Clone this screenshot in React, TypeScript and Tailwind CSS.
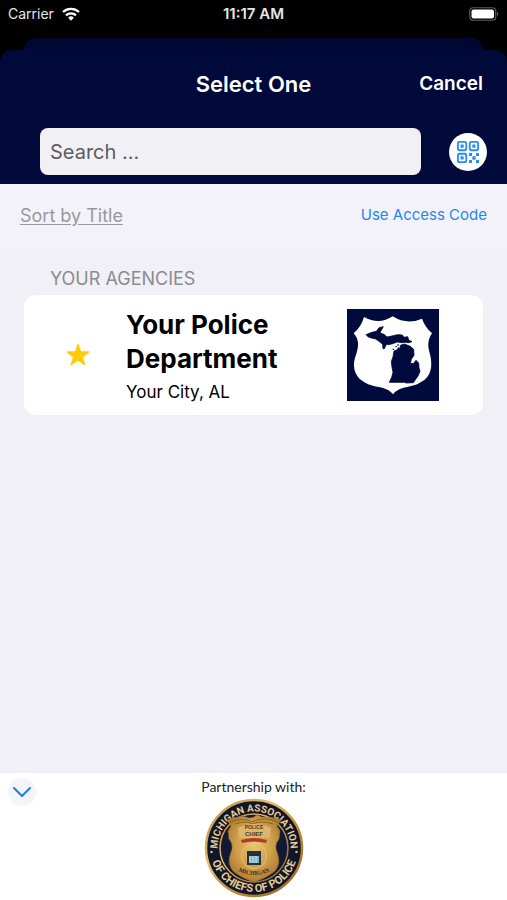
import { useState } from "react";

type Agency = {
  id: number;
  title: string;
  location: string;
};

const agencies: Agency[] = [
  { id: 1, title: "Your Police Department", location: "Your City, AL" },
];

function WifiIcon() {
  return (
    <svg viewBox="0 0 54 42" className="h-[14px] w-[18px]" fill="none" stroke="#fff" strokeWidth="7" aria-hidden="true">
      <path d="M3 15 A35 35 0 0 1 51 15" />
      <path d="M12 25 A22 22 0 0 1 42 25" />
      <path d="M27 41 L18.500 32 A12.500 12.500 0 0 1 35.500 32 Z" fill="#fff" stroke="none" />
    </svg>
  );
}

function BatteryIcon() {
  return (
    <svg viewBox="0 0 30 14" className="h-[14px] w-[30px]" aria-hidden="true">
      <rect x="0.750" y="0.750" width="26" height="12.500" rx="3.500" fill="none" stroke="#5c5c5c" strokeWidth="1.200" />
      <rect x="2.500" y="2.500" width="22.500" height="9" rx="2" fill="#fff" />
      <path d="M28 4.800 Q30 7 28 9.200 Z" fill="#777" />
    </svg>
  );
}

function QrIcon() {
  return (
    <svg viewBox="0 0 66 66" className="size-[22px]" fill="#2a8cf4" aria-hidden="true">
      <g fill="none" stroke="#2a8cf4" strokeWidth="5.500">
        <rect x="2.750" y="2.750" width="25" height="25" rx="5" />
        <rect x="38.250" y="2.750" width="25" height="25" rx="5" />
        <rect x="2.750" y="38.250" width="25" height="25" rx="5" />
      </g>
      <rect x="10.500" y="10.500" width="9.500" height="9.500" rx="1" />
      <rect x="46" y="10.500" width="9.500" height="9.500" rx="1" />
      <rect x="10.500" y="46" width="9.500" height="9.500" rx="1" />
      <rect x="36" y="36" width="9" height="9" rx="1" />
      <rect x="57" y="36" width="9" height="9" rx="1" />
      <rect x="46" y="46" width="10" height="10" rx="1" />
      <rect x="36" y="57" width="9" height="9" rx="1" />
      <rect x="57" y="57" width="9" height="9" rx="1" />
    </svg>
  );
}

function StarIcon() {
  return (
    <svg viewBox="0 0 24 24" className="size-6" fill="#ffcc0a" stroke="#ffcc0a" strokeWidth="1.500" strokeLinejoin="round" aria-hidden="true">
      <path d="M12 1.500 L14.500 9 L22.500 9.100 L16.200 13.900 L18.600 21.500 L12 17 L5.400 21.500 L7.800 13.900 L1.500 9.100 L9.500 9 Z" />
    </svg>
  );
}

function AgencyLogo() {
  return (
    <svg viewBox="0 0 276 276" className="size-[92px] shrink-0 bg-[#000a3c]" role="img" aria-label="Agency logo">
      <path
        fill="#fff"
        d="M51 24 Q96 49 137 22 Q180 49 225 29 Q234 54 255 73 C243 91 241 109 248 132 C259 171 252 205 222 219 C196 238 158 229 138 256 C119 229 76 239 48 217 C19 199 15 166 28 134 C36 110 36 91 20 73 Q43 53 51 24 Z"
      />
      <g fill="#000a3c" stroke="#000a3c" strokeWidth="2.500" strokeLinejoin="round">
        <path d="M57 77 L75 70 L88 67 L96 56 L109 53 L102 65 L99 72 L111 76 L120 84 L135 81 L151 77 L166 78 L171 85 L182 83 L185 93 L195 98 L185 101 L173 100 L164 101 L151 99 L137 104 L124 107 L118 106 L112 119 L108 119 L107 106 L99 99 L86 90 L73 87 L64 84 Z" />
        <path d="M160 109 L172 105 L190 112 L200 121 L201 139 L193 151 L190 163 L199 164 L207 154 L215 162 L216 176 L219 187 L213 201 L206 211 L199 221 L178 222 L173 220 L127 220 L134 205 L138 190 L135 174 L133 158 L138 143 L141 126 L151 122 L154 116 L159 119 Z" />
      </g>
      <path fill="#000a3c" d="M151 106 h4 v4 h-4 Z M137 119 h4 v4 h-4 Z M145 111 h4 v4 h-4 Z" />
    </svg>
  );
}

function PartnerSeal() {
  return (
    <svg viewBox="0 0 100 100" className="size-[100px]" role="img" aria-label="Michigan Association of Chiefs of Police">
      <defs>
        <linearGradient id="gold" x1="0" y1="0" x2="1" y2="1">
          <stop offset="0" stopColor="#b98a3e" />
          <stop offset="0.350" stopColor="#e6bd6c" />
          <stop offset="0.600" stopColor="#c08c3c" />
          <stop offset="1" stopColor="#936324" />
        </linearGradient>
        <radialGradient id="shine" cx="0.500" cy="0.450" r="0.550">
          <stop offset="0" stopColor="#eac673" />
          <stop offset="0.600" stopColor="#cf9f4a" />
          <stop offset="1" stopColor="#b07e34" />
        </radialGradient>
        <path id="sealTop" d="M13.500 50 A36.500 36.500 0 0 1 86.500 50" />
        <path id="sealBottom" d="M6 50 A44 44 0 0 0 94 50" />
        <path id="badgeText" d="M30 71 Q50 83 70 71" />
      </defs>
      <circle cx="50" cy="50" r="48" fill="#101629" stroke="url(#gold)" strokeWidth="2.500" />
      <circle cx="50" cy="50" r="34" fill="#101a35" stroke="url(#gold)" strokeWidth="1.500" />
      <g fill="#e8cc94" fontFamily="Roboto, sans-serif" fontWeight="700" textAnchor="middle">
        <text fontSize="10">
          <textPath href="#sealTop" startOffset="50%">MICHIGAN ASSOCIATION</textPath>
        </text>
        <text fontSize="11">
          <textPath href="#sealBottom" startOffset="50%">OF CHIEFS OF POLICE</textPath>
        </text>
      </g>
      <circle cx="7.500" cy="54" r="1.300" fill="#d8b06a" />
      <circle cx="92.500" cy="54" r="1.300" fill="#d8b06a" />
      {/* badge with the eagle on top */}
      <path
        fill="url(#shine)"
        stroke="#8d6225"
        strokeWidth="0.600"
        d="M50 19 Q54 15 57 19 Q66 18 77 22 L73 28 L76 33 L75 41 Q70 47 73 54 Q78 66 70 74 Q61 81 50 84 Q39 81 30 74 Q22 66 27 54 Q30 47 25 41 L24 33 L27 28 L23 22 Q38 16 45 20 Z"
      />
      <path fill="none" stroke="#82591f" strokeWidth="0.900" d="M26 24 Q40 19 48 24 Q60 18 74 24 M31 26 Q42 22 48 26 Q58 22 69 26" />
      <path d="M34 30 Q50 22 67 30 L66 40 Q50 37 35 40 Z" fill="#dcb66e" />
      <text x="50" y="31" fontSize="5" fontWeight="700" fontFamily="Liberation Sans, sans-serif" textAnchor="middle" fill="#4b3823">POLICE</text>
      <text x="50" y="38" fontSize="6" fontWeight="700" fontFamily="Liberation Sans, sans-serif" textAnchor="middle" fill="#4b3823">CHIEF</text>
      <path d="M37 42 Q50 38 63 42 L62 45 Q50 42 38 45 Z" fill="#b33a26" />
      <circle cx="50" cy="58" r="12.500" fill="none" stroke="#e6c67c" strokeWidth="0.900" />
      <rect x="43" y="53" width="14" height="14" fill="#26313b" />
      <rect x="45" y="58" width="10" height="7" fill="#7fb4cd" />
      <path d="M46 58 v7 M49 58 v7 M52 58 v7" stroke="#f0eee2" strokeWidth="0.800" />
      <text fill="#3d2c12" fontSize="6" fontWeight="700" fontFamily="Liberation Serif, serif" textAnchor="middle">
        <textPath href="#badgeText" startOffset="50%">MICHIGAN</textPath>
      </text>
    </svg>
  );
}

export default function App() {
  const [search, setSearch] = useState("");
  const [showPartner, setShowPartner] = useState(true);

  return (
    <div className="flex min-h-screen flex-col bg-[#f1f0f6] font-['Inter',sans-serif]">
      <div className="bg-black">
        <div className="grid h-[38px] grid-cols-3 items-start px-2 pt-1 leading-5 text-[#e6e6e6]">
          <div className="flex items-center gap-2 text-sm leading-5">
            <span>Carrier</span>
            <WifiIcon />
          </div>
          <span className="text-center text-[15px] font-semibold">11:17 AM</span>
          <div className="flex h-5 items-center justify-end">
            <BatteryIcon />
          </div>
        </div>
        <div className="mx-6 h-3 rounded-t-xl bg-[#000831]" />
        <header className="rounded-t-xl bg-[#000a3a]">
          <div className="grid h-[68px] grid-cols-3 items-center px-6 text-white">
            <h1 className="col-start-2 text-center text-[22px] font-semibold whitespace-nowrap">Select One</h1>
            <button type="button" className="justify-self-end text-[19px] font-semibold">
              Cancel
            </button>
          </div>
          <div className="flex items-center pt-[10px] pr-5 pb-[9px] pl-10">
            <input
              type="text"
              aria-label="Search"
              placeholder="Search ..."
              value={search}
              onChange={(e) => setSearch(e.target.value)}
              className="h-[47px] min-w-0 flex-1 rounded-lg bg-[#f1f0f5] px-[10px] text-xl text-[#555] outline-none placeholder:text-[#5c5c60]"
            />
            <button type="button" aria-label="Scan QR code" className="ml-7 flex size-[38px] items-center justify-center rounded-full bg-white">
              <QrIcon />
            </button>
          </div>
        </header>
      </div>

      <div className="flex h-[63px] items-center justify-between bg-[#f3f2f9] px-5">
        <button type="button" className="text-lg text-[#98989d] underline underline-offset-2">
          Sort by Title
        </button>
        <a href="#access-code" className="text-[15px] text-[#2388f2]">
          Use Access Code
        </a>
      </div>

      <main className="flex-1 px-6 pt-4">
        <h2 className="px-[26px] text-lg leading-8 text-[#8b8b90]">YOUR AGENCIES</h2>
        <ul>
          {agencies.map((agency) => (
            <li key={agency.id} className="flex min-h-[120px] items-center rounded-xl bg-white pr-11 pl-[42px]">
              <StarIcon />
              <div className="ml-9 min-w-0 flex-1 pt-1 text-black">
                <h3 className="max-w-[180px] text-[26px] leading-[34px] font-bold">{agency.title}</h3>
                <p className="mt-0.5 text-[17px] leading-7">{agency.location}</p>
              </div>
              <AgencyLogo />
            </li>
          ))}
        </ul>
      </main>

      <footer className="grid grid-cols-[1fr_auto_1fr] items-start bg-white px-2 pt-1">
        <button
          type="button"
          aria-label="Toggle partner"
          onClick={() => setShowPartner(!showPartner)}
          className="mt-px flex size-7 items-center justify-center rounded-full bg-[#f4f5f7]"
        >
          <svg viewBox="0 0 20 12" className="h-3 w-5" fill="none" stroke="#1f7ce8" strokeWidth="2" strokeLinecap="round" strokeLinejoin="round" aria-hidden="true">
            <path d="M2 2 L10 10 L18 2" />
          </svg>
        </button>
        {showPartner && (
          <div className="flex flex-col items-center pb-0.5">
            <p className="mb-px font-['Lato',sans-serif] text-sm text-[#222]">Partnership with:</p>
            <PartnerSeal />
          </div>
        )}
      </footer>
    </div>
  );
}
